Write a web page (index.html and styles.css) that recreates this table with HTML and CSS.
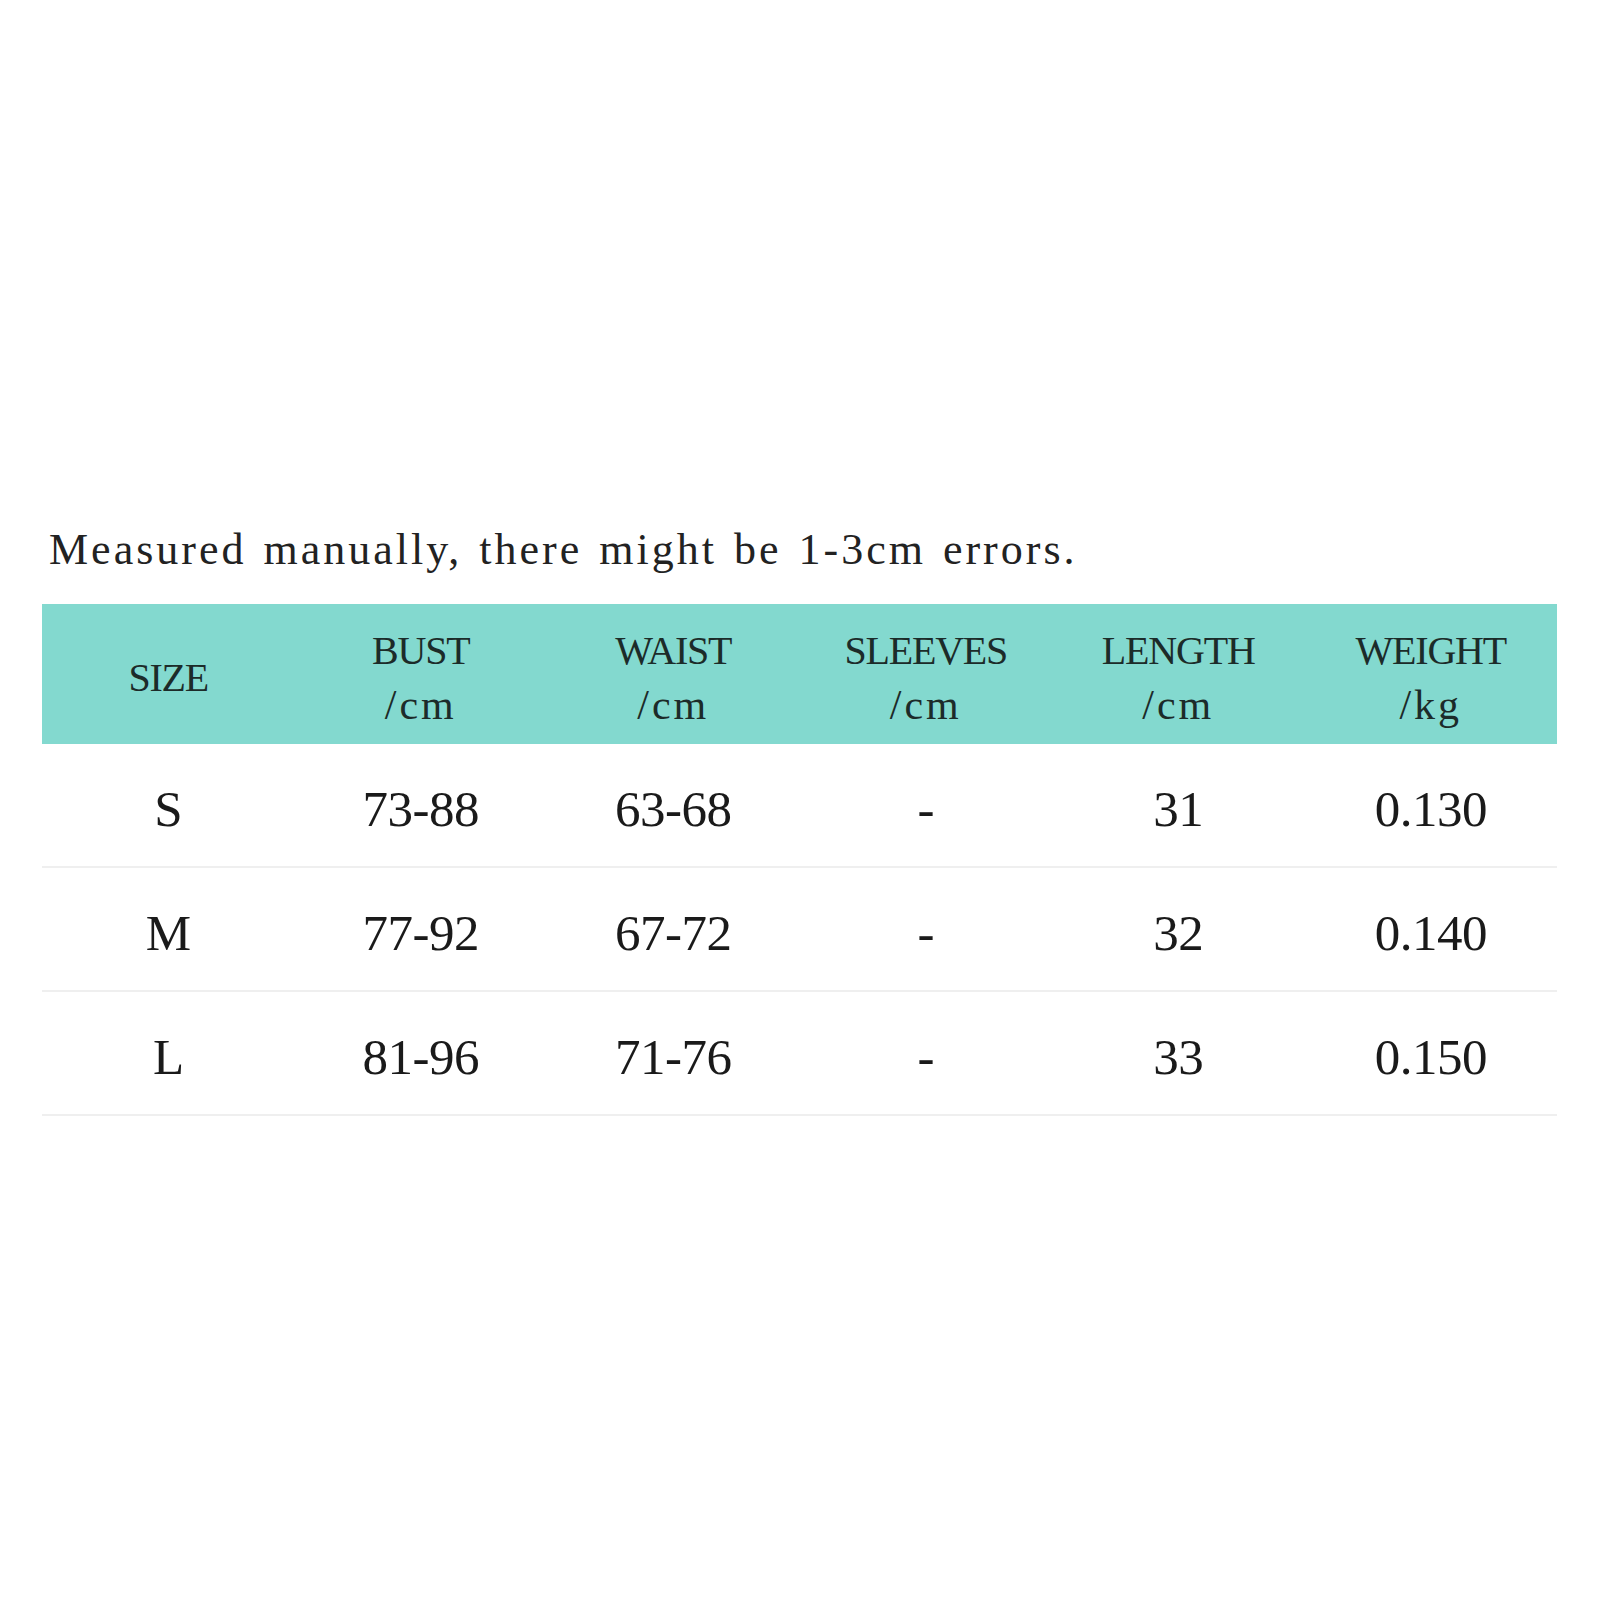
FILE: index.html
```html
<!DOCTYPE html>
<html>
<head>
<meta charset="utf-8">
<link rel="stylesheet" href="styles.css">
</head>
<body>
<div class="page">
  <p class="note">Measured manually, there might be 1-3cm errors.</p>
  <div class="table">
    <div class="row head">
      <div class="cell"><span class="cap">SIZE</span></div>
      <div class="cell"><span class="cap">BUST</span><span class="unit">/cm</span></div>
      <div class="cell"><span class="cap">WAIST</span><span class="unit">/cm</span></div>
      <div class="cell"><span class="cap">SLEEVES</span><span class="unit">/cm</span></div>
      <div class="cell"><span class="cap">LENGTH</span><span class="unit">/cm</span></div>
      <div class="cell"><span class="cap">WEIGHT</span><span class="unit">/kg</span></div>
    </div>
    <div class="row data">
      <div class="cell">S</div><div class="cell">73-88</div><div class="cell">63-68</div><div class="cell">-</div><div class="cell">31</div><div class="cell">0.130</div>
    </div>
    <div class="row data">
      <div class="cell">M</div><div class="cell">77-92</div><div class="cell">67-72</div><div class="cell">-</div><div class="cell">32</div><div class="cell">0.140</div>
    </div>
    <div class="row data">
      <div class="cell">L</div><div class="cell">81-96</div><div class="cell">71-76</div><div class="cell">-</div><div class="cell">33</div><div class="cell">0.150</div>
    </div>
  </div>
</div>
</body>
</html>
```
FILE: styles.css
```css
html, body {
  margin: 0;
  padding: 0;
  background: #ffffff;
}
.page {
  padding: 524px 43px 0 42px;
  color: #1f1f1f;
}
.note {
  margin: 0 0 28px 0;
  padding-left: 7px;
  font-family: "Liberation Serif", serif;
  font-size: 44px;
  line-height: 52px;
  letter-spacing: 3px;
  word-spacing: 3px;
  color: #222;
  white-space: nowrap;
}
.table {
  width: 1515px;
}
.row {
  display: grid;
  grid-template-columns: repeat(6, 1fr);
}
.head {
  background: #83d9cf;
  height: 140px;
  box-sizing: border-box;
  padding-top: 8px;
}
.head .cell {
  display: flex;
  flex-direction: column;
  align-items: center;
  justify-content: center;
  font-family: "Liberation Serif", serif;
  font-size: 40px;
  line-height: 54px;
  color: #1c2b29;
}
.cap {
  letter-spacing: -1.2px;
}
.unit {
  font-size: 42px;
  letter-spacing: 3px;
}
.data {
  height: 124px;
  box-sizing: border-box;
  border-bottom: 2px solid #efefef;
  padding-top: 8px;
}
.data .cell {
  display: flex;
  align-items: center;
  justify-content: center;
  font-family: "Liberation Serif", serif;
  font-size: 51px;
  color: #1a1a1a;
  letter-spacing: -0.5px;
}
```
